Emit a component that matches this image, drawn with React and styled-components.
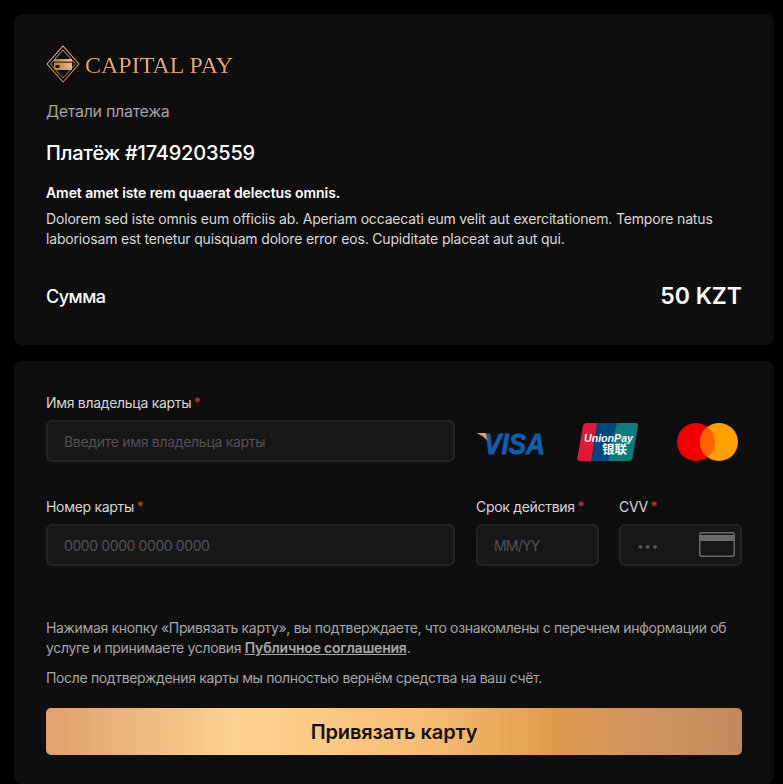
import React from 'react'
import styled, { createGlobalStyle } from 'styled-components'

const GlobalStyle = createGlobalStyle`
  html, body { margin: 0; padding: 0; background: #000; }
  * { box-sizing: border-box; }
  body { font-family: Inter, "Noto Sans", sans-serif; color: #fff; }
`

const Page = styled.div`
  height: 784px;
  overflow: hidden;
  padding: 14px 9px 0 14px;
  display: flex;
  flex-direction: column;
  gap: 16px;
`

const Card = styled.section`
  background: #0e0e0f;
  border-radius: 8px;
  padding: ${(p) => p.$padding};
  flex: ${(p) => (p.$grow ? 1 : 'none')};
`

const LogoRow = styled.div`
  display: flex;
  align-items: center;
  gap: 5px;
  height: 38px;
`

const MarkSvg = styled.svg`
  margin-top: -2px;
`

const LogoText = styled.span`
  font-family: "Liberation Serif", serif;
  font-size: 24px;
  line-height: 38px;
  background: linear-gradient(180deg, #f2c086 0%, #c98f58 100%);
  -webkit-background-clip: text;
  background-clip: text;
  color: transparent;
`

const Subtitle = styled.div`
  margin-top: 16px;
  font-size: 16px;
  line-height: 22px;
  letter-spacing: -0.3px;
  color: #a3a3a3;
`

const PaymentTitle = styled.h1`
  margin: 16px 0 0;
  font-size: 20px;
  line-height: 30px;
  font-weight: 450;
  letter-spacing: -0.2px;
`

const Lead = styled.p`
  margin: 15px 0 0;
  font-size: 14px;
  line-height: 20px;
  font-weight: 600;
  letter-spacing: -0.08px;
`

const Description = styled.p`
  margin: 6px 0 0;
  font-size: 14px;
  line-height: 20px;
  color: #d8d8d8;
  letter-spacing: -0.17px;
`

const SumRow = styled.div`
  margin-top: 29px;
  display: flex;
  justify-content: space-between;
  align-items: center;
  height: 36px;
`

const SumLabel = styled.span`
  font-size: 18px;
  font-weight: 500;
  letter-spacing: -0.5px;
`

const SumValue = styled.span`
  font-size: 23px;
  font-weight: 600;
  letter-spacing: 0;
`

const FormGrid = styled.div`
  display: grid;
  grid-template-columns: 409px 266px;
  column-gap: 21px;
  row-gap: 34px;
`

const Pair = styled.div`
  display: grid;
  grid-template-columns: 123px 123px;
  column-gap: 20px;
`

const Field = styled.div`
  display: flex;
  flex-direction: column;
`

const Label = styled.label`
  font-size: 14px;
  line-height: 20px;
  height: 20px;
  margin-bottom: 7px;
  letter-spacing: -0.3px;
  color: #d6d6d6;
  white-space: nowrap;
`

const Star = styled.span`
  margin-left: -1px;
  color: #b8463e;
`

const InputBox = styled.div`
  position: relative;
  height: 42px;
  background: #171718;
  border: 2px solid #242425;
  border-radius: 6px;
`

const Input = styled.input`
  width: 100%;
  height: 100%;
  padding: 0 16px;
  background: transparent;
  border: none;
  outline: none;
  color: #fff;
  font-family: inherit;
  font-size: ${(p) => p.$size || '14px'};
  letter-spacing: ${(p) => p.$spacing || '-0.3px'};

  &::placeholder {
    color: #525253;
    opacity: 1;
  }
`

const Brands = styled.div`
  display: flex;
  align-items: center;
  gap: 32px;
  height: 70px;
  padding-top: 28px;
`

const CardGlyph = styled.svg`
  position: absolute;
  right: 5px;
  top: 6px;
`

const Notes = styled.div`
  margin-top: 52px;
  font-size: 14px;
  line-height: 20px;
  letter-spacing: -0.34px;
  color: #a6a6a6;
`

const Note = styled.p`
  margin: 0 0 10px;
`

const Link = styled.a`
  color: #a6a6a6;
  font-weight: 600;
  letter-spacing: -0.2px;
  text-decoration: underline;
`

const PayButton = styled.button`
  display: block;
  width: 100%;
  height: 47px;
  margin-top: 20px;
  border: none;
  border-radius: 5px;
  font-family: inherit;
  font-size: 20px;
  font-weight: 600;
  letter-spacing: -0.1px;
  color: #111;
  background: linear-gradient(90deg, #dfa06c 0%, #fbd291 27%, #fdd08e 31%, #f6bd70 55%, #dd9a4e 74%, #d09560 85%, #c28a5c 100%);
`

const LogoMark = () => (
  <MarkSvg width="34" height="38" viewBox="0 0 34 38" fill="none">
    <defs>
      <linearGradient id="mark" x1="0" y1="0" x2="0" y2="1">
        <stop offset="0" stopColor="#efbb80" />
        <stop offset="1" stopColor="#b9824f" />
      </linearGradient>
      <linearGradient id="plate" x1="0" y1="0" x2="1" y2="0">
        <stop offset="0" stopColor="#b57a45" />
        <stop offset="1" stopColor="#f0bc80" />
      </linearGradient>
    </defs>
    <path d="M17 1 33 19 17 37 1 19Z" stroke="url(#mark)" strokeWidth="1.1" />
    <path d="M17 5 29.500 19 17 33 4.500 19Z" stroke="url(#mark)" strokeWidth="0.9" />
    <rect x="8" y="14" width="18" height="11" rx="1" fill="url(#plate)" />
    <rect x="8" y="16.500" width="18" height="1.500" fill="#5a3c20" />
    <rect x="9.500" y="20" width="4" height="3" fill="#1c150e" />
  </MarkSvg>
)

const VisaLogo = () => (
  <svg width="69" height="24" viewBox="0 0 69 24" overflow="visible">
    <path d="M0 3H8C10.500 3 11.500 4 12 6L14 15C11 9 6 5 0 3Z" fill="#f5a51f" />
    <text x="8" y="24" fontFamily="Liberation Sans, sans-serif" fontSize="30" fontWeight="700" fontStyle="italic" fill="#0f5fae" stroke="#0f5fae" strokeWidth="0.8" textLength="61" lengthAdjust="spacingAndGlyphs">VISA</text>
  </svg>
)

const UnionPayLogo = () => (
  <svg width="68" height="38" viewBox="0 0 68 38">
    <path d="M9 0H22L16 38H3C1 38 0 37 .3 35L6 3C6.300 1.500 7.500 0 9 0Z" fill="#e21836" />
    <path d="M20 0H42L33 38H14Z" fill="#00477d" />
    <path d="M40 0H58.500C60.500 0 61.300 1.500 61 3L55.500 35C55 37 54 38 52 38H31Z" fill="#0e7d7a" />
    <text x="7" y="19" fontFamily="Liberation Sans, sans-serif" fontSize="11.500" fontWeight="700" fontStyle="italic" fill="#fff" textLength="49" lengthAdjust="spacingAndGlyphs">UnionPay</text>
    <text x="25" y="31" fontFamily="Noto Sans CJK SC, sans-serif" fontSize="12.500" fontWeight="700" fill="#fff">银联</text>
  </svg>
)

const MastercardLogo = () => (
  <svg width="61" height="38" viewBox="0 0 61 38">
    <circle cx="19" cy="19" r="19" fill="#f00000" />
    <circle cx="42" cy="19" r="19" fill="#ff9f00" />
    <path d="M30.500 3.900A19 19 0 0 1 30.500 34.100 19 19 0 0 1 30.500 3.900Z" fill="#ff6200" />
  </svg>
)

const App = () => {
  return (
    <>
      <GlobalStyle />
      <Page>
        <Card $padding="32px 32px 31px">
          <LogoRow>
            <LogoMark />
            <LogoText>CAPITAL PAY</LogoText>
          </LogoRow>
          <Subtitle>Детали платежа</Subtitle>
          <PaymentTitle>Платёж #1749203559</PaymentTitle>
          <Lead>Amet amet iste rem quaerat delectus omnis.</Lead>
          <Description>
            Dolorem sed iste omnis eum officiis ab. Aperiam occaecati eum velit aut exercitationem. Tempore natus laboriosam est tenetur quisquam dolore error eos. Cupiditate placeat aut aut qui.
          </Description>
          <SumRow>
            <SumLabel>Сумма</SumLabel>
            <SumValue>50 KZT</SumValue>
          </SumRow>
        </Card>
        <Card $padding="32px 32px 0" $grow>
          <FormGrid>
            <Field>
              <Label>Имя владельца карты <Star>*</Star></Label>
              <InputBox>
                <Input placeholder="Введите имя владельца карты" />
              </InputBox>
            </Field>
            <Brands>
              <VisaLogo />
              <UnionPayLogo />
              <MastercardLogo />
            </Brands>
            <Field>
              <Label>Номер карты <Star>*</Star></Label>
              <InputBox>
                <Input placeholder="0000 0000 0000 0000" $spacing="-0.4px" />
              </InputBox>
            </Field>
            <Pair>
              <Field>
                <Label>Срок действия <Star>*</Star></Label>
                <InputBox>
                  <Input placeholder="MM/YY" $spacing="-0.8px" />
                </InputBox>
              </Field>
              <Field>
                <Label>CVV <Star>*</Star></Label>
                <InputBox>
                  <Input placeholder="•••" $size="12px" $spacing="0.5px" />
                  <CardGlyph width="36" height="25" viewBox="0 0 36 25" fill="none">
                    <rect x="0.750" y="0.750" width="34.500" height="23.500" rx="2" stroke="#6a6a6b" strokeWidth="1.500" />
                    <rect x="1" y="3" width="34" height="6" fill="#6a6a6b" />
                  </CardGlyph>
                </InputBox>
              </Field>
            </Pair>
          </FormGrid>
          <Notes>
            <Note>
              Нажимая кнопку «Привязать карту», вы подтверждаете, что ознакомлены с перечнем информации об услуге и принимаете условия <Link href="#">Публичное соглашения</Link>.
            </Note>
            <Note>После подтверждения карты мы полностью вернём средства на ваш счёт.</Note>
          </Notes>
          <PayButton>Привязать карту</PayButton>
        </Card>
      </Page>
    </>
  )
}

export default App
